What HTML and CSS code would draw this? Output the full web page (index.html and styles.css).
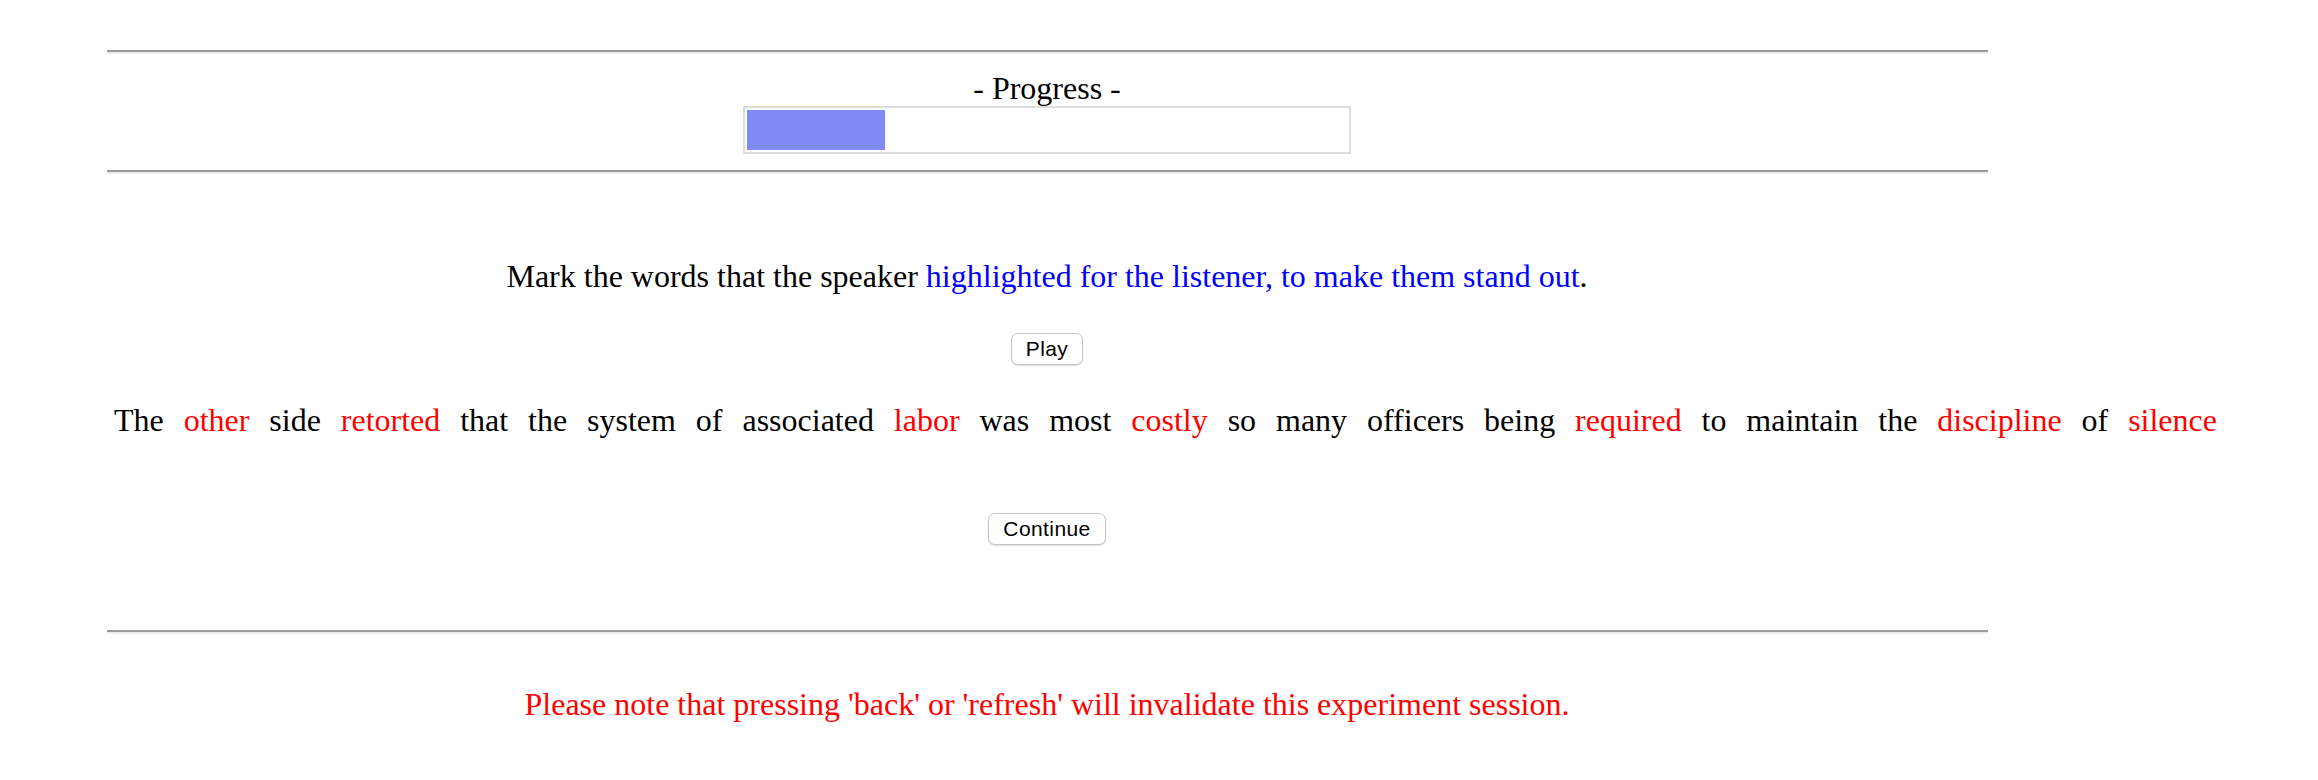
FILE: index.html
```html
<!DOCTYPE html>
<html lang="en">
<head>
<meta charset="utf-8">
<title>Experiment</title>
<link rel="stylesheet" href="styles.css">
</head>
<body>
<div class="page">
  <div class="rule rule-top"></div>
  <div class="progress-title">- Progress -</div>
  <div class="progress-box"><div class="progress-fill" style="width: 138px"></div></div>
  <div class="rule rule-mid"></div>

  <p class="instruction">Mark the words that the speaker <span class="hl">highlighted for the listener, to make them stand out</span>.</p>
  <div class="btn-row btn-row-play"><button class="btn">Play</button></div>

  <div class="words">
    <span class="w">The</span>
    <span class="w red">other</span>
    <span class="w">side</span>
    <span class="w red">retorted</span>
    <span class="w">that</span>
    <span class="w">the</span>
    <span class="w">system</span>
    <span class="w">of</span>
    <span class="w">associated</span>
    <span class="w red">labor</span>
    <span class="w">was</span>
    <span class="w">most</span>
    <span class="w red">costly</span>
    <span class="w">so</span>
    <span class="w">many</span>
    <span class="w">officers</span>
    <span class="w">being</span>
    <span class="w red">required</span>
    <span class="w">to</span>
    <span class="w">maintain</span>
    <span class="w">the</span>
    <span class="w red">discipline</span>
    <span class="w">of</span>
    <span class="w red">silence</span>
  </div>

  <div class="btn-row btn-row-continue"><button class="btn">Continue</button></div>

  <div class="rule rule-bottom"></div>
  <p class="note">Please note that pressing 'back' or 'refresh' will invalidate this experiment session.</p>
</div>
</body>
</html>
```
FILE: styles.css
```css
html, body {
  margin: 0;
  padding: 0;
  background: #ffffff;
}

body {
  font-family: "Liberation Serif", "Times New Roman", serif;
  font-size: 32px;
  line-height: 36px;
  color: #000000;
}

.page {
  width: 2062px;
  margin-left: 16px;
  display: flex;
  flex-direction: column;
  align-items: center;
}

.rule {
  width: 1881px;
  height: 0;
  border-top: 2px solid #9a9a9a;
  border-bottom: 2px solid #eeeeee;
}

.rule-top { margin-top: 50px; }
.rule-mid { margin-top: 16px; }
.rule-bottom { margin-top: 85px; }

.progress-title {
  margin-top: 16px;
  text-align: center;
}

.progress-box {
  margin-top: 0;
  width: 600px;
  height: 40px;
  padding: 2px;
  border: 2px solid #dddddd;
  display: flex;
}

.progress-fill {
  height: 40px;
  background: #8189f7;
}

.instruction {
  margin: 84px 0 0 0;
  text-align: center;
}

.hl { color: #0000ff; }

.btn-row {
  display: flex;
  justify-content: center;
}

.btn-row-play { margin-top: 39px; }
.btn-row-continue { margin-top: 75px; }

.btn {
  height: 32px;
  padding: 0 14px;
  font-family: "Liberation Sans", Arial, sans-serif;
  font-size: 21px;
  letter-spacing: 0.4px;
  line-height: 28px;
  color: #000000;
  background: #ffffff;
  border: 1px solid #c4c4c4;
  border-radius: 7px;
  box-shadow: 0 1px 1px rgba(0, 0, 0, 0.12);
}

.words {
  margin-top: 37px;
  align-self: flex-start;
  margin-left: 98px;
  width: 2103px;
  display: flex;
  justify-content: space-between;
  white-space: nowrap;
}

.red { color: #ff0000; }

.note {
  margin: 52px 0 0 0;
  color: #ff0000;
  text-align: center;
}
```
